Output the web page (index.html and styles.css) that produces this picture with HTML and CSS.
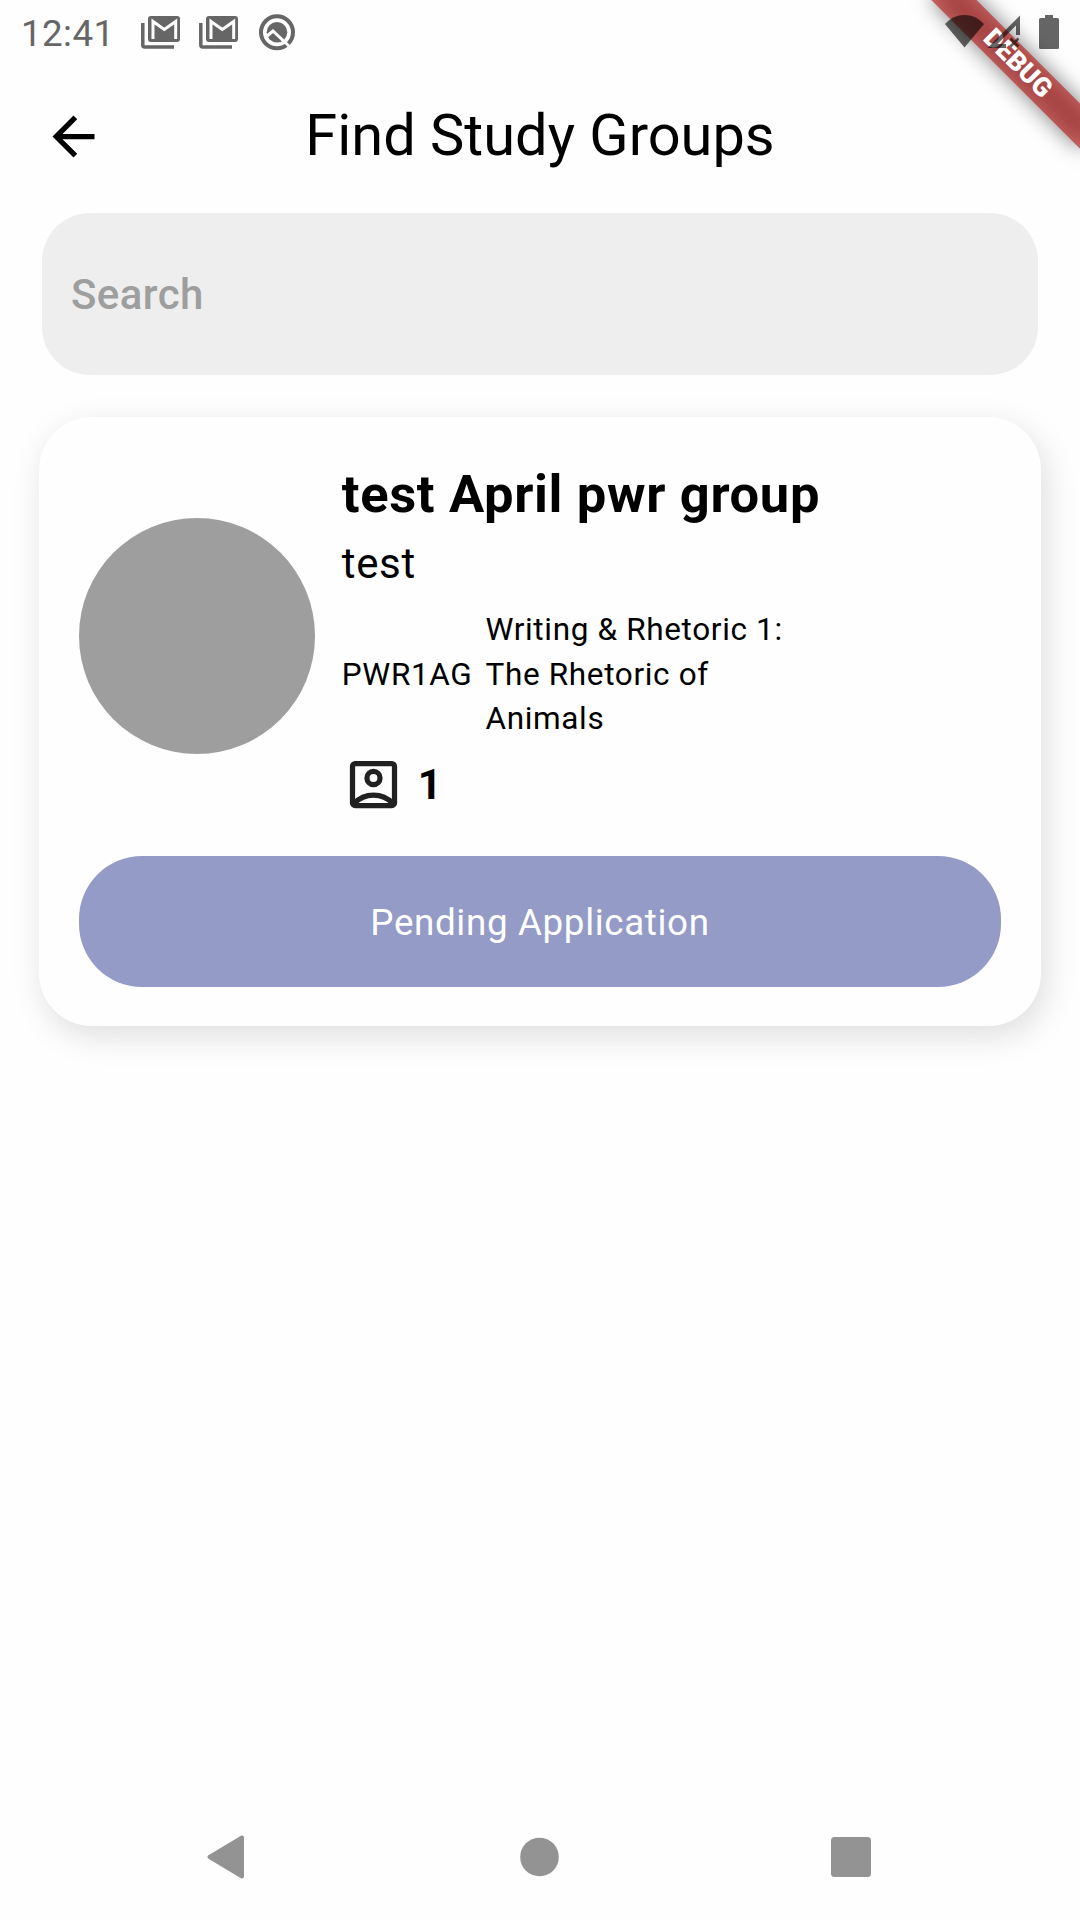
FILE: index.html
```html
<!DOCTYPE html>
<html lang="en">
<head>
<meta charset="utf-8">
<title>Find Study Groups</title>
<link rel="stylesheet" href="styles.css">
</head>
<body>
<div class="screen">
  <header class="status-bar">
    <span class="clock">12:41</span>
    <svg class="notices" width="160" height="40" viewBox="138 11 160 40">
      <defs>
        <g id="mail">
          <path d="M142.800 22v22a2 2 0 0 0 2 2H174" fill="none" stroke="#666" stroke-width="3.500"/>
          <rect x="148" y="15" width="32" height="26" rx="3" fill="#666"/>
          <path d="M153 38V20.500L164.300 28.500 175.700 20.500V38" fill="none" stroke="#fff" stroke-width="3"/>
        </g>
      </defs>
      <use href="#mail"/>
      <use href="#mail" x="58"/>
      <circle cx="277" cy="31.300" r="16" fill="none" stroke="#666" stroke-width="4"/>
      <circle cx="277" cy="31.300" r="10.300" fill="#666"/>
      <path d="M266.500 35.500l6.500-5.500L290 46" fill="none" stroke="#fff" stroke-width="3"/>
    </svg>
    <svg class="system" width="120" height="40" viewBox="942 11 120 40">
      <path d="M964.500 46.500L945 23Q953 14 964.500 14T984 23z"/>
      <path fill-rule="evenodd" d="M1020 14.500V34h-4V24.500L997.500 43H1006v4H987.500z"/>
      <path d="M1010.500 37.500l8 8m0-8l-8 8" stroke="#000" stroke-width="2.600"/>
      <path d="M1045 14h8v3h4.500q1.500 0 1.500 1.500v28q0 1.500-1.500 1.500h-17q-1.500 0-1.500-1.500v-28q0-1.500 1.500-1.500h4.500z"/>
    </svg>
  </header>

  <div class="app-bar">
    <svg class="icon" viewBox="0 0 24 24"><path d="M20 11H7.830l5.590-5.590L12 4l-8 8 8 8 1.410-1.410L7.830 13H20v-2z"/></svg>
    <h1 class="title">Find Study Groups</h1>
  </div>

  <div class="search">Search</div>

  <article class="card">
    <div class="group">
      <div class="avatar"></div>
      <div class="details">
        <h2 class="name">test April pwr group</h2>
        <p class="about">test</p>
        <div class="course">
          <span>PWR1AG</span>
          <span class="course-title">Writing &amp; Rhetoric 1: The Rhetoric of Animals</span>
        </div>
        <div class="members">
          <svg class="icon" viewBox="0 0 24 24" fill="none" stroke="#212121" stroke-width="2">
            <rect x="4" y="4" width="16" height="16" rx="1"/>
            <circle cx="12" cy="9.500" r="2.500"/>
            <path d="M4.600 19.200C6.500 17.200 9.200 16 12 16s5.500 1.200 7.400 3.200"/>
          </svg>
          <span>1</span>
        </div>
      </div>
    </div>
    <div class="button">Pending Application</div>
  </article>

  <nav class="nav-bar">
    <svg width="38" height="44" viewBox="0 0 38 44"><path d="M35 2.500V41.500L2.500 22z" stroke-width="4" stroke-linejoin="round"/></svg>
    <svg width="40" height="40" viewBox="0 0 40 40"><circle cx="21.500" cy="20" r="19.300"/></svg>
    <svg width="40" height="40" viewBox="0 0 40 40"><rect width="40" height="40" rx="3.500"/></svg>
  </nav>

  <div class="debug"><span>DEBUG</span></div>
</div>
</body>
</html>
```
FILE: styles.css
```css
* { box-sizing: border-box; }
body { margin: 0; font-family: Roboto, sans-serif; color: #000; }
h1, h2, p { margin: 0; }
svg { display: block; flex: none; overflow: visible; }
.icon { width: 63px; height: 63px; }

.screen {
  position: relative;
  display: flex;
  flex-direction: column;
  width: 1080px;
  height: 1920px;
  overflow: hidden;
  background: #fefefe;
}

/* The system bar is painted above the debug ribbon */
.status-bar {
  position: relative;
  z-index: 2;
  display: flex;
  align-items: center;
  height: 63px;
  padding: 0 18px 0 21px;
}
.clock { width: 117px; padding-top: 3px; font-size: 36.750px; line-height: 63px; letter-spacing: .4px; color: #666; }
.system { margin-left: auto; opacity: .6; }

.app-bar {
  display: flex;
  align-items: center;
  height: 147px;
  padding: 0 105px 0 42px;
}
.title {
  flex: 1;
  padding-bottom: 4px;
  font-size: 57.750px;
  font-weight: 400;
  text-align: center;
}

.search {
  display: flex;
  align-items: center;
  height: 162px;
  margin: 3px 42px 0;
  padding: 0 29px;
  border-radius: 48px;
  background: #eee;
  color: #9e9e9e;
  font-size: 42px;
  font-weight: 500;
  letter-spacing: .400px;
}

.card {
  height: 609px;
  margin: 42px 39.400px 0;
  padding: 39.400px;
  border-radius: 52.500px;
  background: #fefefe;
  box-shadow: 5px 10px 33px rgba(0, 0, 0, .13);
}
.group { display: flex; align-items: center; gap: 27px; height: 400px; }
.avatar { width: 236px; height: 236px; margin-top: -40px; border-radius: 50%; background: #9e9e9e; }
.details { height: 400px; }
.name { font-size: 52.500px; font-weight: 700; line-height: 76px; letter-spacing: .650px; }
.about { font-size: 42px; line-height: 63px; letter-spacing: .650px; }
.course {
  display: flex;
  align-items: center;
  gap: 13px;
  margin-top: 13px;
  font-size: 31.500px;
  line-height: 44.500px;
  letter-spacing: .650px;
}
.course-title { width: 310px; }
.members { display: flex; align-items: center; gap: 13px; margin-top: 11px; font-size: 42px; font-weight: 700; }

.button {
  display: flex;
  align-items: center;
  justify-content: center;
  height: 131px;
  padding-top: 2px;
  border-radius: 63px;
  background: #939bc6;
  color: #fff;
  font-size: 36.750px;
  letter-spacing: .650px;
}

.nav-bar {
  display: flex;
  align-items: center;
  justify-content: space-between;
  height: 126px;
  margin-top: auto;
  padding: 0 209px 0 207px;
  fill: #939393;
  stroke: #939393;
  stroke-width: 0;
}

/* Diagonal ribbon over the top right corner */
.debug {
  position: absolute;
  top: 47.400px;
  right: -41.900px;
  width: 210px;
  height: 31.500px;
  transform: rotate(45deg);
  color: #fff;
  font-size: 26.400px;
  font-weight: 900;
  line-height: 31.500px;
  text-align: center;
}
.debug::before, .debug::after {
  content: "";
  position: absolute;
  inset: 0;
  background: rgba(0, 0, 0, .5);
  filter: blur(10.400px);
}
.debug::after { background: rgba(183, 28, 28, .63); filter: none; }
.debug span { position: relative; z-index: 1; left: 1px; }
```
